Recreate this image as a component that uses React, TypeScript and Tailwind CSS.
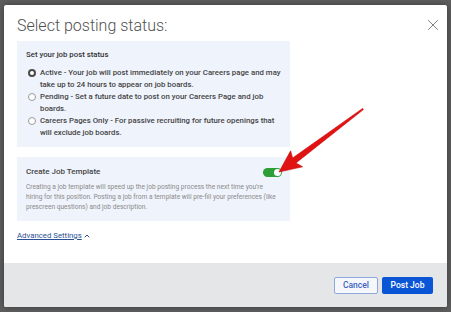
import { X, ChevronUp } from "lucide-react";

const options = [
  {
    id: "active",
    lines: [
      "Active - Your job will post immediately on your Careers page and may",
      "take up to 24 hours to appear on job boards.",
    ],
    checked: true,
  },
  {
    id: "pending",
    lines: ["Pending - Set a future date to post on your Careers Page and job", "boards."],
    checked: false,
  },
  {
    id: "careers",
    lines: [
      "Careers Pages Only - For passive recruiting for future openings that",
      "will exclude job boards.",
    ],
    checked: false,
  },
];

function Radio({ checked }: { checked: boolean }) {
  return checked ? (
    <span className="mt-[2px] w-[8px] h-[8px] rounded-full border-[2.5px] border-[#4a4a4a] bg-white shrink-0" />
  ) : (
    <span className="mt-[2px] w-[8px] h-[8px] rounded-full border border-[#9a9a9a] bg-white shrink-0" />
  );
}

export default function App() {
  return (
    <div
      className="relative w-[451px] h-[312px] overflow-hidden bg-[#5e5e5e] pt-[5px] pl-[4px]"
      style={{ fontFamily: "Roboto, 'Liberation Sans', sans-serif" }}
    >
      <div className="w-[443px] h-[302px] bg-white rounded-[2px] flex flex-col shadow-[0_0_6px_rgba(0,0,0,0.4)] overflow-hidden">
        <div className="flex-1 px-[13px]">
          <div className="flex items-start justify-between">
            <h1 className="pt-[10px] text-[16px] leading-[22px] font-light text-[#505050]">
              Select posting status:
            </h1>
            <X size={18} strokeWidth={1.1} className="mt-[11px] -mr-[8px] text-[#666]" />
          </div>

          <div className="mt-[4px] w-[273px] h-[106px] bg-[#eff3fc] pl-[9px] pt-[8px]">
            <p className="text-[7.8px] leading-[12px] font-medium text-[#333]">
              Set your job post status
            </p>
            <div className="mt-[6px] flex flex-col gap-[1px]">
              {options.map((o) => (
                <div key={o.id} className="flex gap-[4px] pl-[2px]">
                  <Radio checked={o.checked} />
                  <p className="text-[7.8px] leading-[11.5px] font-medium text-[#444] whitespace-nowrap">
                    {o.lines[0]}
                    <br />
                    {o.lines[1]}
                  </p>
                </div>
              ))}
            </div>
          </div>

          <div className="mt-[10px] w-[273px] h-[64px] bg-[#eff3fc] pl-[9px] pr-[8px] pt-[9px]">
            <div className="flex items-center justify-between">
              <p className="text-[8px] leading-[12px] font-medium text-[#444]">
                Create Job Template
              </p>
              <span className="w-[19px] h-[9px] rounded-full bg-[#2e9e38] flex items-center justify-end pr-[1px]">
                <span className="w-[7px] h-[7px] rounded-full bg-white" />
              </span>
            </div>
            <p className="mt-[4px] text-[6.6px] leading-[10px] text-[#8a8a8a] whitespace-nowrap">
              Creating a job template will speed up the job posting process the next time you're
              <br />
              hiring for this position. Posting a job from a template will pre-fill your preferences (like
              <br />
              prescreen questions) and job description.
            </p>
          </div>

          <div className="mt-[9px] flex items-center gap-[1px] text-[#2b4f94]">
            <span className="text-[7.8px] leading-[12px] underline">Advanced Settings</span>
            <ChevronUp size={8} strokeWidth={3} />
          </div>
        </div>

        <div className="h-[44px] bg-[#e5e6e8] flex items-center justify-end gap-[4px] pr-[14px]">
          <button className="w-[44px] h-[17px] rounded-[2px] border border-[#8fa8dc] bg-[#f6f7fa] text-[8.5px] font-medium text-[#3b63c4]">
            Cancel
          </button>
          <button className="w-[51px] h-[17px] rounded-[2px] bg-[#0a55d6] text-[8.5px] font-medium text-white">
            Post Job
          </button>
        </div>
      </div>

      <svg
        className="absolute inset-0 pointer-events-none"
        width="451"
        height="312"
        viewBox="0 0 451 312"
      >
        <polygon
          points="279,172 290.6,150.8 292.6,158 362.6,108.4 363.4,109.6 296,163 302.6,166.8"
          fill="#e01212"
          stroke="#c80a0a"
          strokeWidth="0.6"
          strokeLinejoin="round"
        />
      </svg>
    </div>
  );
}
